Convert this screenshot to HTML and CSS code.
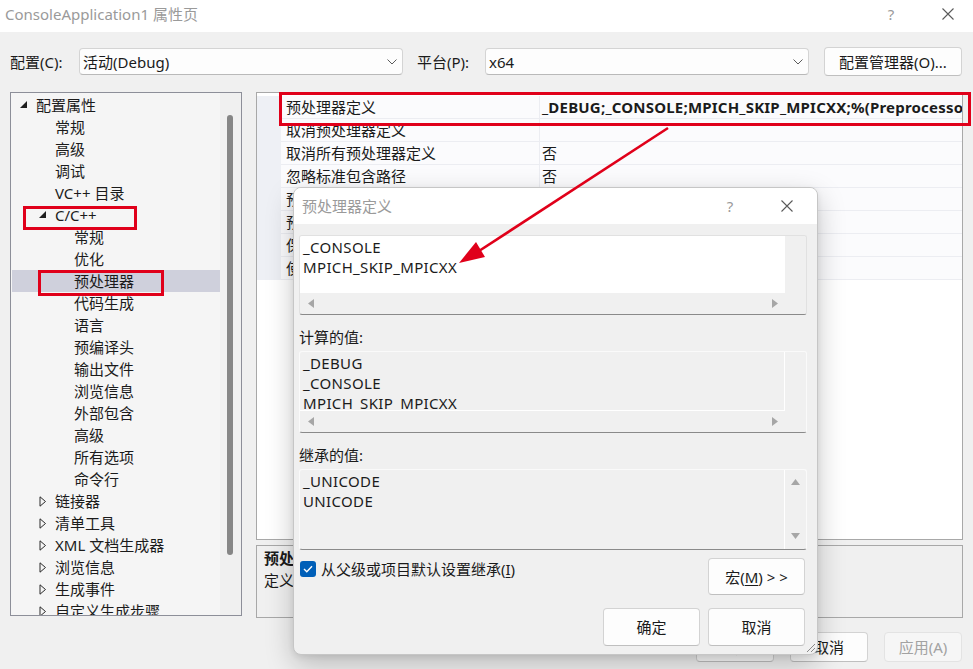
FILE: index.html
```html
<!DOCTYPE html>
<html lang="zh-CN">
<head>
<meta charset="utf-8">
<title>ConsoleApplication1 属性页</title>
<link rel="stylesheet" href="styles.css">
</head>
<body>
<div class="window">
  <header class="titlebar">
    <span class="title">ConsoleApplication1 属性页</span>
    <span class="tb-help">?</span>
    <span class="tb-close"><svg width="12" height="12" viewBox="0 0 12 12"><path d="M0.5 0.5 L11.5 11.5 M11.5 0.5 L0.5 11.5" stroke="#5a5a5a" stroke-width="1.1" fill="none"/></svg></span>
  </header>

  <div class="toolbar">
    <span class="lbl lbl-config">配置(C):</span>
    <div class="combo"><span>活动(Debug)</span><svg class="chev" width="10" height="6" viewBox="0 0 10 6"><polyline points="0.5,0.5 5,5 9.5,0.5" fill="none" stroke="#5c5c5c" stroke-width="1"/></svg></div>
    <span class="lbl lbl-platform">平台(P):</span>
    <div class="combo"><span>x64</span><svg class="chev" width="10" height="6" viewBox="0 0 10 6"><polyline points="0.5,0.5 5,5 9.5,0.5" fill="none" stroke="#5c5c5c" stroke-width="1"/></svg></div>
    <button class="btn btn-cfgmgr">配置管理器(O)...</button>
  </div>

  <div class="content">
    <div class="tree">
      <ul class="tree-list">
        <li class="l0"><svg class="tg" width="16" height="8" viewBox="0 0 16 8"><polygon points="0,7 7,7 7,0" fill="#1e1e1e"/></svg>配置属性</li>
        <li class="l1">常规</li>
        <li class="l1">高级</li>
        <li class="l1">调试</li>
        <li class="l1">VC++ 目录</li>
        <li class="l1t"><svg class="tg" width="16" height="8" viewBox="0 0 16 8"><polygon points="0,7 7,7 7,0" fill="#1e1e1e"/></svg>C/C++</li>
        <li class="l2">常规</li>
        <li class="l2">优化</li>
        <li class="l2 sel">预处理器</li>
        <li class="l2">代码生成</li>
        <li class="l2">语言</li>
        <li class="l2">预编译头</li>
        <li class="l2">输出文件</li>
        <li class="l2">浏览信息</li>
        <li class="l2">外部包含</li>
        <li class="l2">高级</li>
        <li class="l2">所有选项</li>
        <li class="l2">命令行</li>
        <li class="l1t"><svg class="tg" width="16" height="11" viewBox="0 0 16 11"><polygon points="1,0.8 6.5,5.5 1,10.2" fill="none" stroke="#2a2a2a" stroke-width="1"/></svg>链接器</li>
        <li class="l1t"><svg class="tg" width="16" height="11" viewBox="0 0 16 11"><polygon points="1,0.8 6.5,5.5 1,10.2" fill="none" stroke="#2a2a2a" stroke-width="1"/></svg>清单工具</li>
        <li class="l1t"><svg class="tg" width="16" height="11" viewBox="0 0 16 11"><polygon points="1,0.8 6.5,5.5 1,10.2" fill="none" stroke="#2a2a2a" stroke-width="1"/></svg>XML 文档生成器</li>
        <li class="l1t"><svg class="tg" width="16" height="11" viewBox="0 0 16 11"><polygon points="1,0.8 6.5,5.5 1,10.2" fill="none" stroke="#2a2a2a" stroke-width="1"/></svg>浏览信息</li>
        <li class="l1t"><svg class="tg" width="16" height="11" viewBox="0 0 16 11"><polygon points="1,0.8 6.5,5.5 1,10.2" fill="none" stroke="#2a2a2a" stroke-width="1"/></svg>生成事件</li>
        <li class="l1t"><svg class="tg" width="16" height="11" viewBox="0 0 16 11"><polygon points="1,0.8 6.5,5.5 1,10.2" fill="none" stroke="#2a2a2a" stroke-width="1"/></svg>自定义生成步骤</li>
      </ul>
      <div class="vscroll"><div class="thumb"></div></div>
    </div>

    <div class="right">
      <div class="grid">
        <div class="row"><span class="gut"></span><span class="name">预处理器定义</span><span class="val bold">_DEBUG;_CONSOLE;MPICH_SKIP_MPICXX;%(PreprocessorDefinitions)</span></div>
        <div class="row"><span class="gut"></span><span class="name">取消预处理器定义</span><span class="val"></span></div>
        <div class="row"><span class="gut"></span><span class="name">取消所有预处理器定义</span><span class="val">否</span></div>
        <div class="row"><span class="gut"></span><span class="name">忽略标准包含路径</span><span class="val">否</span></div>
        <div class="row"><span class="gut"></span><span class="name">预处理到文件</span><span class="val">否</span></div>
        <div class="row"><span class="gut"></span><span class="name">预处理取消显示行号</span><span class="val">否</span></div>
        <div class="row"><span class="gut"></span><span class="name">保留注释</span><span class="val">否</span></div>
        <div class="row"><span class="gut"></span><span class="name">使用标准符合性预处理器</span><span class="val"></span></div>
      </div>
      <div class="desc">
        <div class="desc-title">预处理器定义</div>
        <div class="desc-text">定义源文件的预处理符号。</div>
      </div>
    </div>
  </div>

  <div class="footer">
    <button class="btn fbtn">确定</button>
    <button class="btn fbtn">取消</button>
    <button class="btn fbtn disabled">应用(A)</button>
  </div>
</div>

<div class="dlg">
  <div class="dlg-title">
    <span class="dlg-caption">预处理器定义</span>
    <span class="dlg-help">?</span>
    <span class="dlg-close"><svg width="12" height="12" viewBox="0 0 12 12"><path d="M0.5 0.5 L11.5 11.5 M11.5 0.5 L0.5 11.5" stroke="#5a5a5a" stroke-width="1.1" fill="none"/></svg></span>
  </div>
  <div class="dlg-body">
    <div class="ebox box1">
      <div class="etext">_CONSOLE
MPICH_SKIP_MPICXX</div>
      <div class="ecorner"></div>
      <div class="hscroll">
        <svg width="6" height="9" viewBox="0 0 6 9"><polygon points="6,0 0,4.5 6,9" fill="#a6a6a6"/></svg>
        <svg width="6" height="9" viewBox="0 0 6 9"><polygon points="0,0 6,4.5 0,9" fill="#a6a6a6"/></svg>
      </div>
    </div>

    <div class="dlg-label">计算的值:</div>
    <div class="ebox ro box2">
      <div class="etext">_DEBUG
_CONSOLE
MPICH_SKIP_MPICXX</div>
      <div class="ecorner"></div>
      <div class="hscroll">
        <svg width="6" height="9" viewBox="0 0 6 9"><polygon points="6,0 0,4.5 6,9" fill="#a6a6a6"/></svg>
        <svg width="6" height="9" viewBox="0 0 6 9"><polygon points="0,0 6,4.5 0,9" fill="#a6a6a6"/></svg>
      </div>
    </div>

    <div class="dlg-label">继承的值:</div>
    <div class="ebox ro box3">
      <div class="etext">_UNICODE
UNICODE</div>
      <div class="vscroll-arrows">
        <svg width="9" height="6" viewBox="0 0 9 6"><polygon points="0,6 4.5,0 9,6" fill="#a6a6a6"/></svg>
        <svg width="9" height="6" viewBox="0 0 9 6"><polygon points="0,0 4.5,6 9,0" fill="#a6a6a6"/></svg>
      </div>
    </div>

    <div class="opt-row">
      <label class="chk"><span class="chkbox"><svg width="10" height="8" viewBox="0 0 10 8"><polyline points="1,4 3.8,6.8 9,1.2" fill="none" stroke="#fff" stroke-width="1.4"/></svg></span><span class="chk-text">从父级或项目默认设置继承(<u>I</u>)</span></label>
      <button class="btn dbtn">宏(<u>M</u>) &gt; &gt;</button>
    </div>

    <div class="dlg-buttons">
      <button class="btn dbtn">确定</button>
      <button class="btn dbtn">取消</button>
    </div>
  </div>
  <svg class="grip" width="12" height="12" viewBox="0 0 12 12"><path d="M11 3 L3 11 M11 7 L7 11" stroke="#8a8a8a" stroke-width="1"/></svg>
</div>

<div class="annot">
  <div class="redbox rb-row"></div>
  <div class="redbox rb-cpp"></div>
  <div class="redbox rb-pre"></div>
  <svg class="arrow" width="973" height="669" viewBox="0 0 973 669">
    <line x1="668" y1="128" x2="479" y2="251" stroke="#e0001a" stroke-width="2.6"/>
    <polygon points="459,263 485,257 476,242" fill="#e0001a"/>
  </svg>
</div>
</body>
</html>
```

FILE: styles.css
```css
* { box-sizing: border-box; }
html, body { margin: 0; padding: 0; }
body {
  width: 973px;
  height: 669px;
  overflow: hidden;
  position: relative;
  background: #f0f0f0;
  font-family: "Noto Sans", "Noto Sans CJK SC", sans-serif;
  font-size: 15px;
  line-height: 20px;
  color: #1b1b1b;
}
u { text-underline-offset: 2px; }

/* title bar */
.titlebar {
  height: 32px;
  background: #fff;
  display: flex;
  align-items: center;
  padding: 0 2px 4px 5px;
}
.title { flex: 1; color: #9a9a9a; }
.tb-help { width: 30px; text-align: center; color: #9a9a9a; }
.tb-close { width: 46px; margin-left: 19px; display: flex; justify-content: center; }

/* toolbar */
.toolbar {
  display: flex;
  align-items: center;
  height: 29px;
  margin-top: 15px;
  padding: 0 11px 0 10px;
}
.lbl { color: #1b1b1b; }
.lbl-config { width: 69px; }
.lbl-platform { width: 68px; margin-left: 14px; }
.combo {
  width: 324px;
  height: 27px;
  display: flex;
  align-items: center;
  justify-content: space-between;
  background: #fdfdfd;
  border: 1px solid #d4d4d4;
  border-bottom-color: #b9b9b9;
  border-radius: 4px;
  padding: 0 5px 0 3px;
}
.btn {
  font: inherit;
  color: #1b1b1b;
  background: #fdfdfd;
  border: 1px solid #d3d3d3;
  border-bottom-color: #bfbfbf;
  border-radius: 4px;
  padding: 0;
}
.btn-cfgmgr { width: 138px; height: 29px; margin-left: 15px; }

/* content */
.content {
  display: flex;
  gap: 14px;
  margin-top: 16px;
  padding: 0 10px;
}
.tree {
  width: 232px;
  height: 524px;
  border: 1px solid #8d8f99;
  background: #f5f5f5;
  display: flex;
  overflow: hidden;
}
.tree-list {
  list-style: none;
  margin: 0;
  padding: 1px 0 0 0;
  width: 209px;
  overflow: hidden;
}
.tree-list li {
  height: 22px;
  line-height: 22px;
  display: flex;
  align-items: center;
  white-space: nowrap;
}
.tg { flex: none; }
.l0 { padding-left: 9px; }
.l1 { padding-left: 44px; }
.l1t { padding-left: 28px; }
.l2 { padding-left: 63px; }
.tree-list li.sel { background: #cfd0dc; margin-left: 1px; padding-left: 62px; }
.vscroll {
  width: 21px;
  background: #f0f0f0;
  padding: 22px 0 0 7px;
}
.thumb { width: 6px; height: 440px; background: #868686; border-radius: 3px; }

.right { width: 707px; display: flex; flex-direction: column; }
.grid {
  height: 448px;
  border: 1px solid #a8a8a8;
  background: #fff;
  padding-top: 3px;
  overflow: hidden;
}
.row {
  display: grid;
  grid-template-columns: 24px 259px 1fr;
  height: 23px;
  line-height: 22px;
}
.gut { background: #eef0f5; }
.name {
  padding-left: 5px;
  border-right: 1px solid #ecedf2;
  border-bottom: 1px solid #ecedf2;
  background: #fbfbfd;
  white-space: nowrap;
  overflow: hidden;
}
.val {
  padding-left: 2px;
  border-bottom: 1px solid #ecedf2;
  background: #fbfbfd;
  white-space: nowrap;
  overflow: hidden;
}
.bold { font-weight: 700; letter-spacing: 0.2px; }
.desc {
  margin-top: 5px;
  height: 73px;
  border: 1px solid #a8a8a8;
  padding: 2px 7px;
}
.desc-title { font-weight: 700; }
.desc-text { margin-top: 2px; }

.footer {
  display: flex;
  justify-content: flex-end;
  gap: 16px;
  padding: 14px 11px 0 0;
}
.fbtn { width: 78px; height: 30px; }
.fbtn.disabled { color: #a2a2a2; background: #f6f6f6; border-color: #e3e3e3; }

/* dialog */
.dlg {
  position: absolute;
  left: 293px;
  top: 187px;
  width: 525px;
  height: 468px;
  background: #f0f0f0;
  border: 1px solid #c6c6c6;
  border-radius: 8px;
  overflow: hidden;
  box-shadow: 0 10px 28px rgba(0,0,0,0.22), 0 2px 6px rgba(0,0,0,0.08);
}
.dlg-title {
  height: 36px;
  background: #fff;
  display: flex;
  align-items: center;
  padding: 0 10px 0 8px;
}
.dlg-caption { flex: 1; color: #9a9a9a; }
.dlg-help { width: 30px; text-align: center; color: #9a9a9a; }
.dlg-close { width: 40px; margin-left: 22px; display: flex; justify-content: center; }
.dlg-body { padding: 11px 10px 0 5px; }

.ebox {
  display: grid;
  grid-template-columns: 1fr 21px;
  grid-template-rows: 1fr 21px;
  border: 1px solid #e1e1e1;
  border-bottom-color: #8a8a8a;
  border-radius: 3px;
  overflow: hidden;
}
.box1 { height: 80px; }
.box2 { height: 82px; }
.box3 { height: 81px; grid-template-rows: 1fr; }
.etext {
  background: #fff;
  padding: 1px 3px;
  white-space: pre;
  overflow: hidden;
  line-height: 20px;
  letter-spacing: 0.35px;
}
.ecorner { grid-column: 2; grid-row: 1 / span 2; background: #f0f0f0; }
.hscroll {
  grid-column: 1;
  grid-row: 2;
  display: flex;
  align-items: center;
  justify-content: space-between;
  padding: 0 7px 0 8px;
}
.ebox.ro { border-color: #fafafa; border-bottom-color: #8a8a8a; }
.ro .etext { background: transparent; border-right: 1px solid #fff; }
.box2 .etext { border-bottom: 1px solid #fff; }
.vscroll-arrows {
  display: flex;
  flex-direction: column;
  justify-content: space-between;
  align-items: center;
  padding: 9px 0 10px;
}
.dlg-label { margin: 12px 0 4px; }

.opt-row {
  display: flex;
  justify-content: space-between;
  align-items: flex-start;
  margin-top: 8px;
  padding-right: 2px;
}
.chk { display: flex; align-items: center; margin: 1px 0 0 1px; gap: 5px; }
.chkbox {
  width: 16px;
  height: 16px;
  background: #005fb8;
  border-radius: 3px;
  display: flex;
  align-items: center;
  justify-content: center;
}
.dbtn { width: 97px; height: 37px; }
.dlg-buttons {
  display: flex;
  justify-content: flex-end;
  gap: 8px;
  margin-top: 13px;
  padding-right: 2px;
}
.dlg-buttons .dbtn { height: 38px; }
.grip { position: absolute; right: 1px; bottom: 1px; }

/* annotations */
.annot { position: absolute; left: 0; top: 0; width: 973px; height: 669px; pointer-events: none; }
.redbox { position: absolute; border: 3px solid #e0001a; }
.rb-row { left: 279px; top: 92px; width: 692px; height: 34px; }
.rb-cpp { left: 23px; top: 206px; width: 114px; height: 24px; }
.rb-pre { left: 38px; top: 270px; width: 126px; height: 26px; }
.arrow { position: absolute; left: 0; top: 0; }
```
